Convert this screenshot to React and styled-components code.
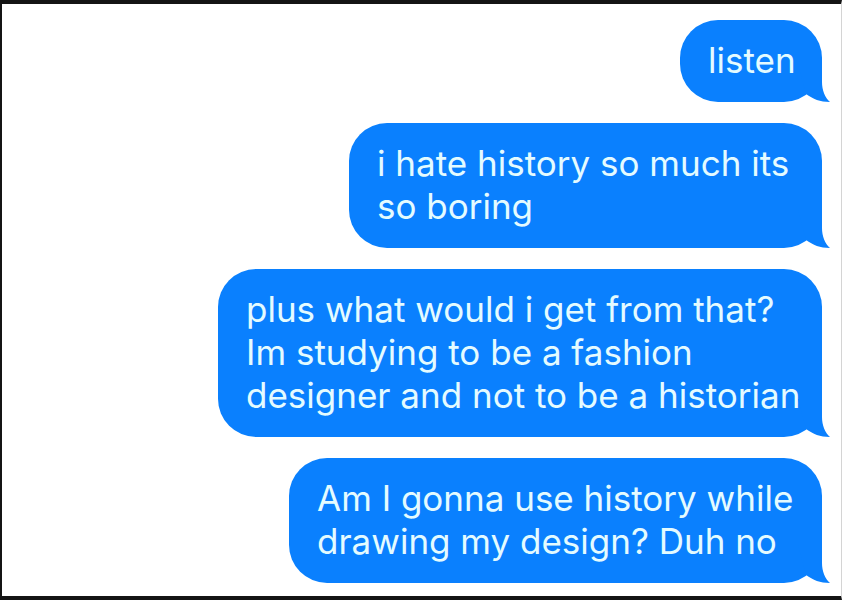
import styled, { createGlobalStyle } from "styled-components";

const messages = [
    { text: "listen", width: 142 },
    { text: "i hate history so much its\nso boring", width: 473 },
    { text: "plus what would i get from that?\nIm studying to be a fashion\ndesigner and not to be a historian", width: 604 },
    { text: "Am I gonna use history while\ndrawing my design? Duh no", width: 533 },
];

const App = () => {
    return(
        <>
        <GlobalStyle/>
        <Screen>
            <Thread>
                {messages.map(({ text, width }) => (
                    <Bubble key={text} $width={width}>
                        {text}
                        <Tail viewBox="0 0 32 40" aria-hidden="true">
                            <path d="M0 2H24V20C24 28 27 36 32 40C22 40 15 37 8 32Z"/>
                        </Tail>
                    </Bubble>
                ))}
            </Thread>
        </Screen>
        </>
    );
};

const GlobalStyle = createGlobalStyle`
body {
margin: 0;
background: #ffffff;
}
`;

const Screen = styled.main`
box-sizing: border-box;
min-height: 100vh;
padding: 16px 19px 13px;
border-style: solid;
border-color: #141414 #d4d4d4 #141414 #141414;
border-width: 4px 1px 4px 2px;
`;

const Thread = styled.ul`
display: flex;
flex-direction: column;
align-items: flex-end;
gap: 21px;
margin: 0;
padding: 0;
list-style: none;
`;

const Bubble = styled.li`
position: relative;
box-sizing: border-box;
min-width: ${(props) => props.$width}px;
padding: 19px 20px 20px 28px;
border-radius: 38px;
background: #0a80fe;
color: #e4fbff;
font-family: Inter, "Liberation Sans", sans-serif;
font-size: 35px;
line-height: 43px;
white-space: pre-line;
`;

const Tail = styled.svg`
position: absolute;
right: -8px;
bottom: 0;
width: 32px;
height: 40px;
fill: #0a80fe;
`;

export default App;
